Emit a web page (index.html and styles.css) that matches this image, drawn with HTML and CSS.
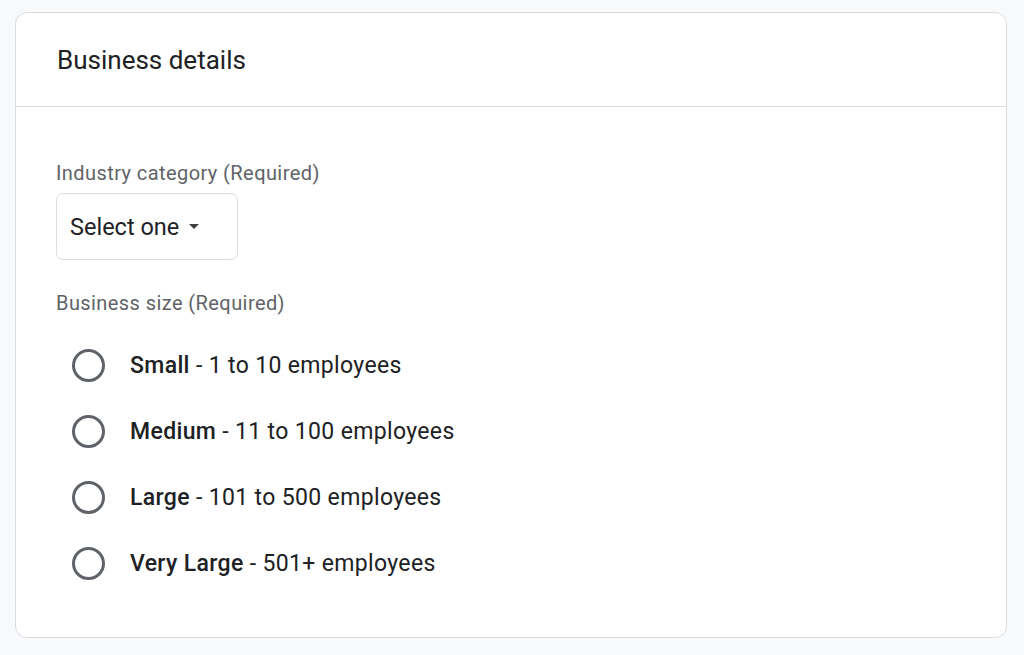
FILE: index.html
```html
<!DOCTYPE html>
<html lang="en">
<head>
<meta charset="utf-8">
<title>Business details</title>
<link rel="stylesheet" href="styles.css">
</head>
<body>
<section class="card">
  <header class="card-header">
    <h2 class="card-title">Business details</h2>
  </header>
  <div class="card-body">
    <div class="field-label">Industry category (Required)</div>
    <button class="select" type="button">
      <span class="select-text">Select one</span>
      <span class="select-arrow"></span>
    </button>
    <div class="field-label size-label">Business size (Required)</div>
    <ul class="radio-list">
      <li class="radio-row"><span class="radio-touch"><span class="radio"></span></span><span class="radio-text"><b>Small</b> - 1 to 10 employees</span></li>
      <li class="radio-row"><span class="radio-touch"><span class="radio"></span></span><span class="radio-text"><b>Medium</b> - 11 to 100 employees</span></li>
      <li class="radio-row"><span class="radio-touch"><span class="radio"></span></span><span class="radio-text"><b>Large</b> - 101 to 500 employees</span></li>
      <li class="radio-row"><span class="radio-touch"><span class="radio"></span></span><span class="radio-text"><b>Very Large</b> - 501+ employees</span></li>
    </ul>
  </div>
</section>
</body>
</html>
```
FILE: styles.css
```css
* { box-sizing: border-box; }
html, body {
  margin: 0;
  padding: 0;
  background: #f8f9fa;
  font-family: Roboto, "Liberation Sans", Arial, sans-serif;
  color: #202124;
}
body {
  padding: 12px 17px 0 15px;
}
.card {
  background: #ffffff;
  border: 1px solid #dadce0;
  border-radius: 12px;
  height: 626px;
}
.card-header {
  height: 94px;
  display: flex;
  align-items: center;
  padding-left: 41px;
  border-bottom: 1px solid #dadce0;
}
.card-title {
  margin: 0;
  font-size: 26px;
  font-weight: 400;
  color: #202124;
  letter-spacing: 0;
}
.card-body {
  padding: 54px 40px 0 40px;
}
.field-label {
  font-size: 20px;
  line-height: 24px;
  color: #5f6368;
  letter-spacing: 0.42px;
}
.select {
  margin-top: 8px;
  width: 182px;
  height: 67px;
  display: flex;
  align-items: center;
  padding: 0 0 0 13px;
  border: 1px solid #dadce0;
  border-radius: 7px;
  background: #fff;
  font-family: inherit;
  cursor: pointer;
}
.select-text {
  font-size: 23.5px;
  color: #202124;
}
.select-arrow {
  margin-left: 10px;
  width: 0;
  height: 0;
  border-left: 5px solid transparent;
  border-right: 5px solid transparent;
  border-top: 5px solid #3c4043;
}
.size-label {
  margin-top: 31px;
}
.radio-list {
  list-style: none;
  margin: 17px 0 0 0;
  padding: 0;
}
.radio-row {
  height: 66px;
  display: flex;
  align-items: center;
}
.radio-touch {
  width: 74px;
  display: flex;
  align-items: center;
  padding-left: 16px;
}
.radio {
  width: 33px;
  height: 33px;
  border: 3px solid #5f6368;
  border-radius: 50%;
}
.radio-text {
  font-size: 23px;
  color: #202124;
  letter-spacing: 0.35px;
}
.radio-text b {
  font-weight: 500;
}
```
